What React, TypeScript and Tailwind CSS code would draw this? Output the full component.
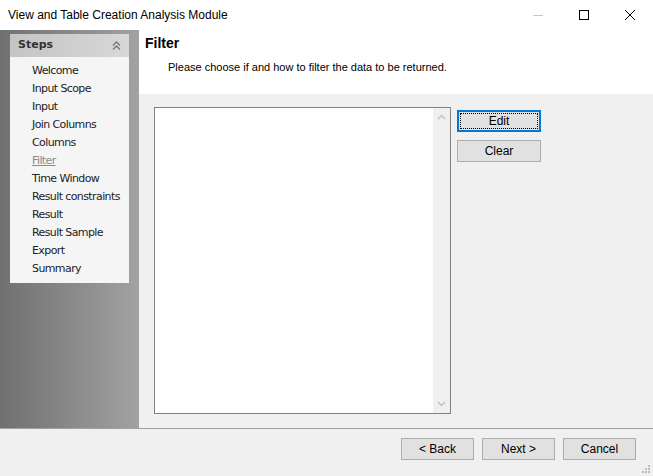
import React from 'react';

const steps = [
  'Welcome',
  'Input Scope',
  'Input',
  'Join Columns',
  'Columns',
  'Filter',
  'Time Window',
  'Result constraints',
  'Result',
  'Result Sample',
  'Export',
  'Summary',
];

const WinButton: React.FC<{ label: string; focused?: boolean }> = ({ label, focused }) => (
  <button
    className={`w-[84px] h-[22px] bg-[#e1e1e1] text-[12px] text-black flex items-center justify-center ${
      focused ? 'border-2 border-[#0078d7] p-[1px]' : 'border border-[#adadad]'
    }`}
  >
    {focused ? (
      <span className="w-full h-full border border-dotted border-black flex items-center justify-center">{label}</span>
    ) : (
      label
    )}
  </button>
);

export default function App() {
  return (
    <div
      className="w-[653px] h-[476px] flex flex-col bg-[#f0f0f0] overflow-hidden"
      style={{ fontFamily: '"Liberation Sans", "Noto Sans", sans-serif' }}
    >
      {/* Title bar */}
      <div className="h-[30px] bg-white flex items-center shrink-0">
        <span className="pl-[8px] text-[12px] text-black flex-1">View and Table Creation Analysis Module</span>
        <div className="flex items-center h-full">
          <div className="w-[46px] h-full flex items-center justify-center">
            <div className="w-[10px] h-px bg-[#c8c8c8]" />
          </div>
          <div className="w-[46px] h-full flex items-center justify-center">
            <div className="w-[10px] h-[10px] border border-black" />
          </div>
          <div className="w-[46px] h-full flex items-center justify-center">
            <svg width="12" height="12" viewBox="0 0 12 12">
              <path d="M1 1 L11 11 M11 1 L1 11" stroke="#000" strokeWidth="1" />
            </svg>
          </div>
        </div>
      </div>

      {/* Body */}
      <div className="flex flex-1 min-h-0">
        {/* Sidebar */}
        <div className="w-[139px] shrink-0 bg-gradient-to-r from-[#707070] to-[#a2a2a2] pt-[4px] px-[10px]">
          <div className="w-[119px] bg-[#f5f5f5]">
            <div className="h-[23px] bg-gradient-to-r from-[#c4c4c4] to-[#d8d8d8] flex items-center justify-between px-[8px]">
              <span className="font-bold text-[#333]" style={{ fontFamily: '"DejaVu Sans", sans-serif', fontSize: '11px' }}>
                Steps
              </span>
              <svg width="9" height="10" viewBox="0 0 9 10">
                <path d="M1 4.5 L4.5 1 L8 4.5 M1 8.5 L4.5 5 L8 8.5" stroke="#777" strokeWidth="1.3" fill="none" />
              </svg>
            </div>
            <div className="pt-[5px] pb-[5px] pl-[22px] flex flex-col" style={{ fontFamily: '"DejaVu Sans", sans-serif' }}>
              {steps.map(s => (
                <div
                  key={s}
                  className={`h-[18px] leading-[18px] text-[11px] tracking-[-0.6px] ${
                    s === 'Filter' ? 'text-[#8a8a8a] underline' : 'text-[#222]'
                  }`}
                >
                  {s}
                </div>
              ))}
            </div>
          </div>
        </div>

        {/* Main */}
        <div className="flex-1 flex flex-col">
          <div className="h-[64px] bg-white shrink-0 pl-[6px] pt-[3px]">
            <div className="text-[14px] font-bold text-black">Filter</div>
            <div className="pl-[23px] pt-[5px] text-[11px] text-black">
              Please choose if and how to filter the data to be returned.
            </div>
          </div>
          <div className="flex-1 flex pl-[15px] pt-[13px] pb-[14px] gap-[6px]">
            <div className="w-[297px] border border-[#828282] bg-white flex justify-end">
              <div className="w-[17px] bg-[#f0f0f0] flex flex-col justify-between items-center py-[6px]">
                <svg width="9" height="6" viewBox="0 0 9 6">
                  <path d="M1 5 L4.5 1.5 L8 5" stroke="#c0c0c0" strokeWidth="1.3" fill="none" />
                </svg>
                <svg width="9" height="6" viewBox="0 0 9 6">
                  <path d="M1 1 L4.5 4.5 L8 1" stroke="#c0c0c0" strokeWidth="1.3" fill="none" />
                </svg>
              </div>
            </div>
            <div className="flex flex-col gap-[8px] pt-[3px]">
              <WinButton label="Edit" focused />
              <WinButton label="Clear" />
            </div>
          </div>
        </div>
      </div>

      {/* Footer */}
      <div className="h-[48px] shrink-0 border-t border-[#a0a0a0] bg-[#f0f0f0] relative flex justify-end items-start pt-[9px] pr-[17px] gap-[8px]">
        <button className="w-[73px] h-[22px] bg-[#e1e1e1] border border-[#adadad] text-[12px] text-black">&lt; Back</button>
        <button className="w-[73px] h-[22px] bg-[#e1e1e1] border border-[#adadad] text-[12px] text-black">Next &gt;</button>
        <button className="w-[73px] h-[22px] bg-[#e1e1e1] border border-[#adadad] text-[12px] text-black">Cancel</button>
        <svg className="absolute right-[2px] bottom-[2px]" width="10" height="10" viewBox="0 0 10 10">
          <rect x="7" y="1" width="2" height="2" fill="#bcbcbc" />
          <rect x="4" y="4" width="2" height="2" fill="#bcbcbc" />
          <rect x="7" y="4" width="2" height="2" fill="#bcbcbc" />
          <rect x="1" y="7" width="2" height="2" fill="#bcbcbc" />
          <rect x="4" y="7" width="2" height="2" fill="#bcbcbc" />
          <rect x="7" y="7" width="2" height="2" fill="#bcbcbc" />
        </svg>
      </div>
    </div>
  );
}
